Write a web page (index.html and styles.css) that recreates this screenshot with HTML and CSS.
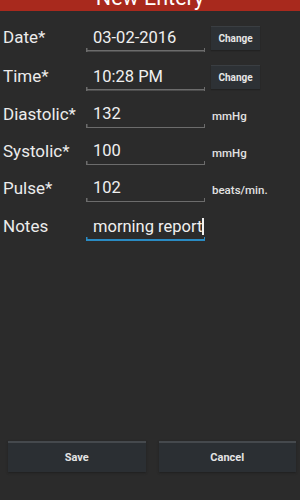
FILE: index.html
```html
<!DOCTYPE html>
<html>
<head>
<meta charset="utf-8">
<link rel="stylesheet" href="styles.css">
</head>
<body>
<div class="screen">
  <div class="header"><div class="title">New Entery</div></div>
  <div class="form">
    <div class="row tall">
      <div class="label">Date*</div>
      <div class="field">03-02-2016</div>
      <div class="btn">Change</div>
    </div>
    <div class="row mid">
      <div class="label">Time*</div>
      <div class="field">10:28 PM</div>
      <div class="btn">Change</div>
    </div>
    <div class="row">
      <div class="label">Diastolic*</div>
      <div class="field">132</div>
      <div class="unit">mmHg</div>
    </div>
    <div class="row">
      <div class="label">Systolic*</div>
      <div class="field">100</div>
      <div class="unit">mmHg</div>
    </div>
    <div class="row">
      <div class="label">Pulse*</div>
      <div class="field">102</div>
      <div class="unit">beats/min.</div>
    </div>
    <div class="row tall">
      <div class="label">Notes</div>
      <div class="field focus">morning report<span class="cursor"></span></div>
      <div></div>
    </div>
  </div>
  <div class="actions">
    <div class="action">Save</div>
    <div class="action">Cancel</div>
  </div>
</div>
</body>
</html>
```
FILE: styles.css
```css
html, body {
  margin: 0;
  padding: 0;
  background: #2b2b2b;
}
.screen {
  width: 300px;
  height: 500px;
  display: flex;
  flex-direction: column;
  font-family: Roboto, "Liberation Sans", sans-serif;
  color: #ececec;
  background: #2b2b2b;
}
.header {
  height: 11px;
  overflow: hidden;
  background: #a8291d;
  display: flex;
  justify-content: center;
}
.title {
  margin-top: -14px;
  font-size: 21.5px;
  line-height: 24px;
  color: #ffffff;
}
.form {
  margin-top: 6px;
  display: flex;
  flex-direction: column;
}
.row {
  display: grid;
  grid-template-columns: 86px 125px 1fr;
  align-items: center;
  height: 37px;
}
.row.tall { height: 40px; }
.row.mid { height: 38px; }
.label {
  padding-left: 3px;
  font-size: 17px;
  color: #ececec;
}
.field {
  width: 119px;
  box-sizing: border-box;
  height: 26px;
  margin-top: 3px;
  padding-left: 7px;
  font-size: 16.5px;
  line-height: 24px;
  color: #f0f0f0;
  background:
    linear-gradient(#6c6c6c, #6c6c6c) left bottom / 1.5px 4px no-repeat,
    linear-gradient(#6c6c6c, #6c6c6c) right bottom / 1.5px 4px no-repeat,
    linear-gradient(#6c6c6c, #6c6c6c) left bottom / 100% 1.5px no-repeat;
}
.field.focus {
  background:
    linear-gradient(#2a8bc3, #2a8bc3) left bottom / 1.5px 4px no-repeat,
    linear-gradient(#2a8bc3, #2a8bc3) right bottom / 1.5px 4px no-repeat,
    linear-gradient(#2a8bc3, #2a8bc3) left bottom / 100% 2px no-repeat;
}
.cursor {
  display: inline-block;
  width: 1.5px;
  height: 17px;
  background: #f0f0f0;
  vertical-align: -3px;
}
.btn {
  width: 49px;
  height: 24px;
  box-sizing: border-box;
  background: #2d3135;
  border-top: 1px solid #3a3e42;
  box-shadow: 0 1px 1px #222;
  display: flex;
  align-items: center;
  justify-content: center;
  font-size: 10px;
  font-weight: bold;
  color: #e6e6e6;
  margin-top: 1px;
}
.unit {
  padding-left: 1px;
  margin-top: 5px;
  font-size: 11.5px;
  font-weight: 500;
  color: #e2e2e2;
}
.actions {
  margin-top: auto;
  margin-bottom: 28px;
  display: flex;
  gap: 13px;
  padding: 0 4px 0 8px;
}
.action {
  flex: 1;
  height: 31px;
  box-sizing: border-box;
  background: #2b2f33;
  border-top: 2px solid #45494d;
  box-shadow: 0 1px 2px #1f1f1f;
  display: flex;
  align-items: center;
  justify-content: center;
  font-size: 11px;
  font-weight: bold;
  color: #e4e4e4;
}
```
